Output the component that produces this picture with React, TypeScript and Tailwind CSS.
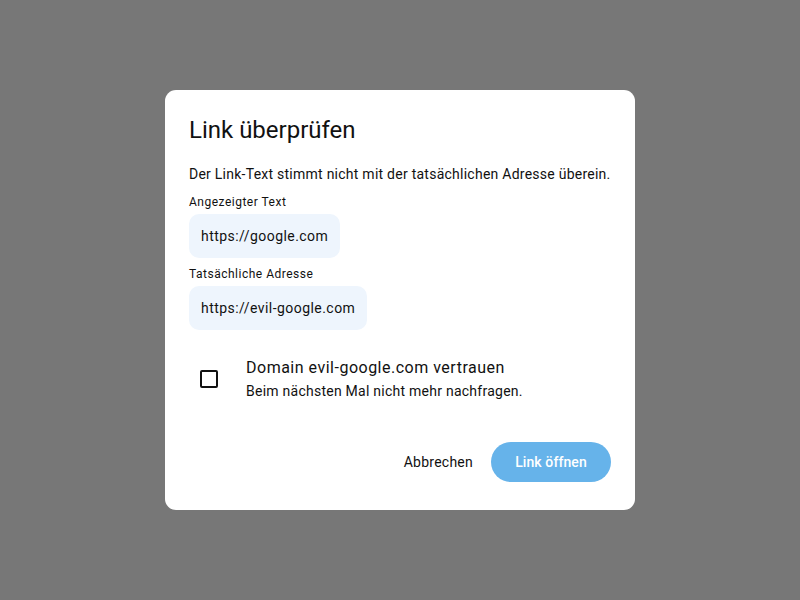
export default function App() {
  return (
    <div
      className="flex h-[600px] w-[800px] items-center justify-center bg-[#777777]"
      style={{ fontFamily: "Roboto, 'Noto Sans', sans-serif" }}
    >
      <div className="flex h-[420px] w-[470px] flex-col rounded-[11px] bg-white px-6 pt-6 text-[#111111]">
        <h2 className="text-[24px] leading-[32px] font-normal">Link überprüfen</h2>
        <p className="mt-[18px] text-[14px] leading-5 tracking-[0.25px]">
          Der Link-Text stimmt nicht mit der tatsächlichen Adresse überein.
        </p>

        <div className="mt-[10px] text-[12px] leading-4 tracking-[0.5px]">Angezeigter Text</div>
        <div className="mt-[4px] flex">
          <div className="flex h-11 items-center rounded-[10px] bg-[#eef5fd] px-3 text-[14px] tracking-[0.45px]">
            https://google.com
          </div>
        </div>

        <div className="mt-[8px] text-[12px] leading-4 tracking-[0.5px]">Tatsächliche Adresse</div>
        <div className="mt-[4px] flex">
          <div className="flex h-11 items-center rounded-[10px] bg-[#eef5fd] px-3 text-[14px] tracking-[0.45px]">
            https://evil-google.com
          </div>
        </div>

        <label className="mt-[26px] flex items-center">
          <div className="flex h-10 w-10 items-center justify-center">
            <div className="h-[18px] w-[18px] rounded-[2px] border-2 border-[#111111]" />
          </div>
          <div className="ml-[17px] flex flex-col">
            <span className="text-[16px] leading-6 tracking-[0.5px]">Domain evil-google.com vertrauen</span>
            <span className="mt-px text-[14px] leading-5 tracking-[0.25px]">
              Beim nächsten Mal nicht mehr nachfragen.
            </span>
          </div>
        </label>

        <div className="mt-[41px] flex items-center justify-end gap-[6px]">
          <button className="h-10 rounded-full px-3 text-[14px] font-normal tracking-[0.25px]">Abbrechen</button>
          <button className="h-10 w-[120px] rounded-full bg-[#66b3ea] text-[14px] font-medium tracking-[0.1px] text-white">
            Link öffnen
          </button>
        </div>
      </div>
    </div>
  );
}
